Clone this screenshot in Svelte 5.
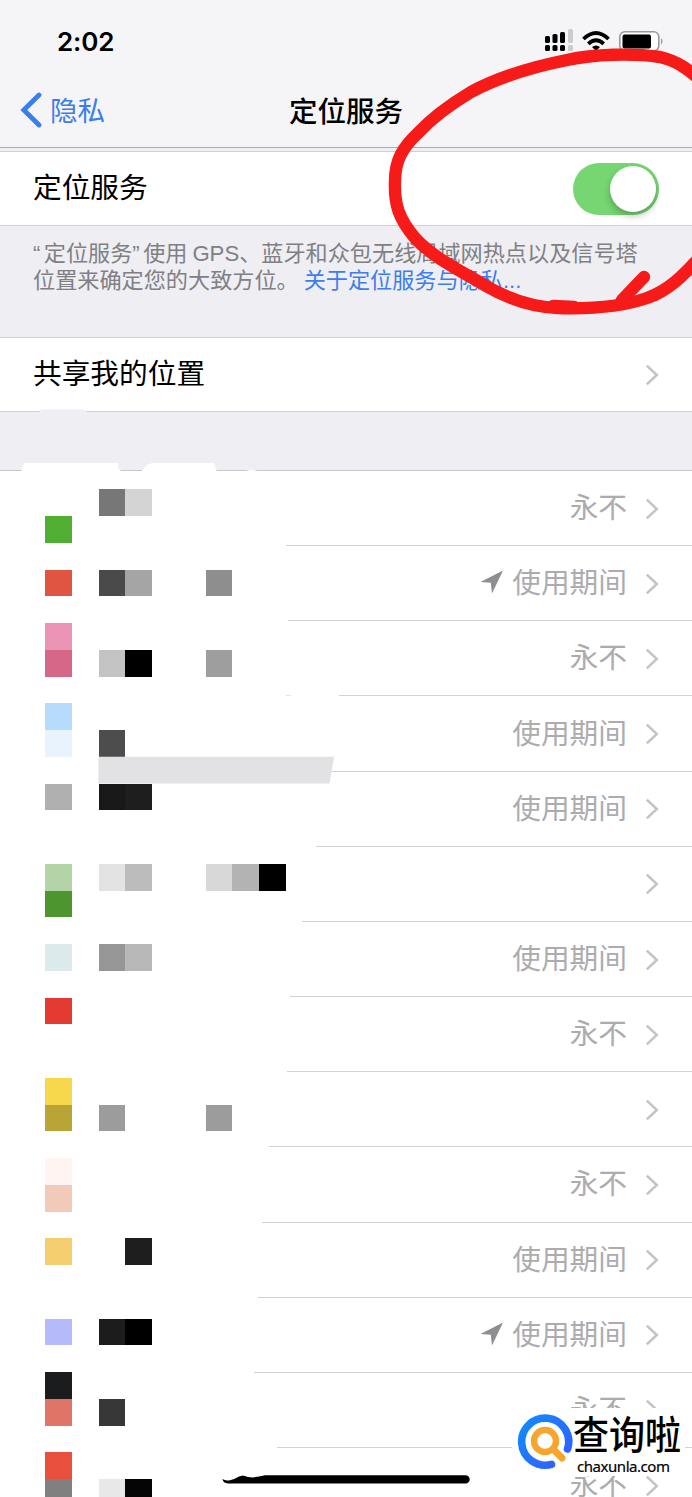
<script>
  const apps = [
    { status: "永不", line: 286 },
    { status: "使用期间", line: 288, active: true },
    { status: "永不", line: 339 },
    { status: "使用期间", line: 329 },
    { status: "使用期间", line: 316 },
    { status: "", line: 302 },
    { status: "使用期间", line: 290 },
    { status: "永不", line: 287 },
    { status: "", line: 269 },
    { status: "永不", line: 262 },
    { status: "使用期间", line: 258 },
    { status: "使用期间", line: 254, active: true },
    { status: "永不", line: 277 },
    { status: "永不", line: 277 },
  ];

  // mosaic cells: [column, row, colour]
  const cell = 26.75;
  const cells = [
    [2, 0, "#777"], [3, 0, "#d4d4d4"],
    [0, 1, "#50ae32"],
    [0, 3, "#e05442"], [2, 3, "#4a4a4a"], [3, 3, "#a5a5a5"], [6, 3, "#8e8e8e"],
    [0, 5, "#eb93b4"],
    [0, 6, "#d66789"], [2, 6, "#c3c3c3"], [3, 6, "#000"], [6, 6, "#9e9e9e"],
    [0, 8, "#b6dbfb"],
    [0, 9, "#e8f3fe"], [2, 9, "#4d4d4d"],
    [0, 11, "#b0b0b0"], [2, 11, "#181818"], [3, 11, "#1e1e1e"],
    [0, 14, "#b3d4a7"], [2, 14, "#e3e3e3"], [3, 14, "#bcbcbc"],
    [6, 14, "#d8d8d8"], [7, 14, "#b3b3b3"], [8, 14, "#000"],
    [0, 15, "#4d952f"],
    [0, 17, "#dceaeb"], [2, 17, "#969696"], [3, 17, "#b8b8b8"],
    [0, 19, "#e33a31"],
    [0, 22, "#f7d84c"],
    [0, 23, "#b9a536"], [2, 23, "#9c9c9c"], [6, 23, "#9c9c9c"],
    [0, 25, "#fff4f1"],
    [0, 26, "#f2cab9"],
    [0, 28, "#f5cf6f"], [3, 28, "#1e1e1e"],
    [0, 31, "#b5bafa"], [2, 31, "#1c1c1c"], [3, 31, "#000"],
    [0, 33, "#1b1c1e"],
    [0, 34, "#df7467"], [2, 34, "#373737"],
    [0, 36, "#e94f3d"],
    [0, 37, "#808080"], [2, 37, "#e8e8e8"], [3, 37, "#050505"],
  ];
</script>

{#snippet chevron()}
  <svg class="chevron" width="14" height="22" viewBox="0 0 14 22">
    <path d="M1.8 1.6 L11.8 11 L1.8 20.4" fill="none" stroke="#c5c5c9" stroke-width="2.6" />
  </svg>
{/snippet}

<div class="screen">
  <header>
    <div class="statusbar">
      <span class="time">2:02</span>
      <svg width="124" height="30" viewBox="0 0 124 30">
        <g fill="#000">
          <rect x="5" y="11" width="5" height="7" rx="1.6" />
          <rect x="12.5" y="9" width="5" height="9" rx="1.6" />
          <rect x="20" y="7" width="5" height="11" rx="1.6" />
          <rect x="5" y="20" width="5" height="6" rx="1.6" />
          <rect x="12.5" y="20" width="5" height="6" rx="1.6" />
          <rect x="20" y="20" width="5" height="6" rx="1.6" />
        </g>
        <g fill="#ccccce">
          <rect x="28" y="4" width="5" height="14" rx="1.6" />
          <rect x="28" y="20" width="5" height="6" rx="1.6" />
        </g>
        <g fill="none" stroke="#000" stroke-width="3.8">
          <path d="M43.5 14 Q56 2 68.5 14" />
          <path d="M48.3 18.8 Q56 11.6 63.7 18.8" />
        </g>
        <path d="M52 22 Q56 18.8 60 22 L56 26 Z" />
        <rect x="79.8" y="6.8" width="39" height="19" rx="5" fill="#fff" stroke="#9a9a9c" stroke-width="1.6" />
        <rect x="82.5" y="9.5" width="28.5" height="14" rx="2" />
        <path d="M121 13 q3 3 0 7 Z" fill="#9a9a9c" />
      </svg>
    </div>
    <div class="navbar">
      <span class="back">
        <svg width="22" height="36" viewBox="0 0 22 36">
          <path d="M19 3 L3.8 18 L19 33" fill="none" stroke="#3a7eea" stroke-width="4.8" stroke-linecap="round" />
        </svg>
        <span class="back-label">隐私</span>
      </span>
      <h1>定位服务</h1>
      <span></span>
    </div>
  </header>

  <div class="row first">
    <span class="label">定位服务</span>
    <span class="toggle"><span class="knob"></span></span>
  </div>
  <p class="note">
    <span class="latin quote">“</span>定位服务<span class="latin quote">”</span>使用 <span class="latin">GPS</span>、蓝牙和众包无线局域网热点以及信号塔<br />位置来确定您的大致方位。 <a href="#about">关于定位服务与隐私<span class="latin">...</span></a>
  </p>
  <div class="row share">
    <span class="label">共享我的位置</span>
    {@render chevron()}
  </div>

  <div class="gap"></div>

  <div class="apps">
    {#each apps as app}
      <div class="app">
        {#if app.active}
          <svg class="arrow" width="24" height="24" viewBox="0 0 24 24">
            <path d="M23 .5 L12 23.5 L10.8 12.8 L.5 12 Z" fill="#8e8e92" />
          </svg>
        {/if}
        <span class="label">{app.status}</span>
        {@render chevron()}
        <i class="line" style="left:{app.line}px"></i>
      </div>
    {/each}
  </div>

  <svg class="overlay" width="692" height="1497" viewBox="0 0 692 1497">
    <path d="M38 413 L42 409.5 H84 L88 413 Z" fill="#eeeef3" />
    <path d="M21 472 L24 463 H118 V468 L122 472 Z M141 472 Q147 463 153 463 H214 L217 472 Z M243 472 L249 470 H254 L259 472 Z" fill="#fff" />
    <path d="M286 695.5 H291" stroke="#e4e4e6" />
    {#each cells as [col, row, color]}
      <rect x={45 + col * cell} y={489.3 + row * cell} width={cell} height={cell} fill={color} shape-rendering="crispEdges" />
    {/each}
    <path d="M98.5 756.8 H334 L329.5 783.5 H98.5 Z" fill="#e2e2e5" />
    <path d="M222.5 1479 Q225 1481 230 1480.2 Q235 1479 239 1476.5 L243 1475.5 Q248 1477.4 253 1477.4 Q258 1477 265 1475.2 H465.5 A4.2 4.2 0 0 1 465.5 1483.6 H228 Q223 1483 222.5 1479 Z" />
    <g fill="none" stroke="#f61b19" stroke-width="12.4" stroke-linecap="round" stroke-linejoin="round">
      <path d="M700 80 C688 69 677 61 660 57 C633 53 594 54 567 60 C532 67 497 78 471 92 C451 104 431 119 418 133 C403 147 395 160 395 181 C394 205 399 219 415 238 C433 258 463 272 486 286 C505 297 530 307 558 308 C590 309 624 306 647 298 C668 291 684 275 700 257" />
      <path d="M644 277 L622 300 M553 306 L574 307" />
    </g>
  </svg>

  <div class="watermark">
    <svg width="56" height="58" viewBox="0 0 56 58" fill="none" stroke-linecap="round">
      <defs>
        <linearGradient id="ring" x1="0" y1="0" x2="1" y2="1">
          <stop offset="0" stop-color="#128bff" />
          <stop offset="1" stop-color="#345cff" />
        </linearGradient>
      </defs>
      <path d="M50.5 36 A23.5 23.5 0 1 0 34.5 51.3" stroke="url(#ring)" stroke-width="7.6" />
      <circle cx="28" cy="28" r="11" stroke="#f7a52d" stroke-width="6.4" />
      <path d="M37 37 L45 45" stroke="#f7a52d" stroke-width="7" />
    </svg>
    <div class="brand">
      <b>查询啦</b>
      <span>chaxunla.com</span>
    </div>
  </div>
</div>

<style>
  :global(body) { margin: 0; }
  .screen {
    position: relative;
    width: 692px;
    height: 1497px;
    overflow: hidden;
    background: #eeeef3;
    color: #000;
    font-family: "Noto Sans CJK SC", sans-serif;
    font-size: 28.7px;
    line-height: 40px;
  }
  header { box-sizing: border-box; height: 148px; background: #f5f5f7; border-bottom: 1px solid #acacb0; }
  .statusbar { display: flex; justify-content: space-between; padding: 25px 28px 0 57px; height: 52px; box-sizing: border-box; }
  .statusbar svg { flex-shrink: 0; }
  .time { font: 600 26px/34px Inter, sans-serif; letter-spacing: -0.1px; }
  .navbar { display: grid; grid-template-columns: 1fr auto 1fr; align-items: center; height: 60px; padding: 28px 20px 0; }
  .back { display: flex; align-items: center; gap: 8px; color: #3a7eea; font-size: 27.5px; }
  .back-label { padding-bottom: 2px; }
  h1 { margin: 0; font-size: 28.5px; font-weight: 500; }
  .row {
    display: flex;
    align-items: center;
    justify-content: space-between;
    box-sizing: border-box;
    height: 75px;
    padding: 0 33px;
    background: #fff;
    border-top: 1px solid #d0d0d4;
    border-bottom: 1px solid #d0d0d4;
  }
  .first { margin-top: 3px; }
  .label { padding-bottom: 5px; }
  .chevron { flex-shrink: 0; }
  .toggle { display: flex; justify-content: flex-end; box-sizing: border-box; width: 86px; height: 52px; padding: 3px; border-radius: 26px; background: #76d672; }
  .knob { width: 46px; height: 46px; border-radius: 50%; background: #fff; box-shadow: 0 4px 7px rgba(0, 0, 0, 0.25); }
  .note { box-sizing: border-box; height: 111px; margin: 0; padding: 12px 33px 0; color: #808084; font-size: 22.15px; line-height: 27px; white-space: nowrap; }
  .latin { font-family: "Liberation Sans", sans-serif; line-height: 1; }
  .quote { letter-spacing: 3.4px; }
  a { color: #3c7df0; text-decoration: none; }
  .gap { height: 58px; }
  .apps { border-top: 1px solid #c8c8cc; background: #fff; }
  .app { position: relative; display: flex; align-items: center; justify-content: flex-end; height: 75.17px; padding-right: 33px; color: #acacaf; }
  .app .chevron { margin-left: 18px; }
  .arrow { margin: 0 8px 3px 0; }
  .line { position: absolute; right: 0; bottom: 0; height: 1px; background: #d2d2d5; }
  .overlay { position: absolute; left: 0; top: 0; pointer-events: none; }
  .watermark { position: absolute; left: 512px; top: 1408px; display: flex; width: 168px; height: 68px; padding-left: 5px; background: #fff; }
  .watermark svg { flex-shrink: 0; margin-top: 5px; }
  .brand { display: flex; flex-direction: column; width: 110px; }
  .brand b { font-size: 36px; line-height: 48px; font-weight: 500; white-space: nowrap; transform: scaleY(1.08); }
  .brand span { margin-left: 4px; font: 400 15px/20px "Noto Sans", sans-serif; letter-spacing: -0.45px; white-space: nowrap; -webkit-text-stroke: 0.2px; }
</style>
